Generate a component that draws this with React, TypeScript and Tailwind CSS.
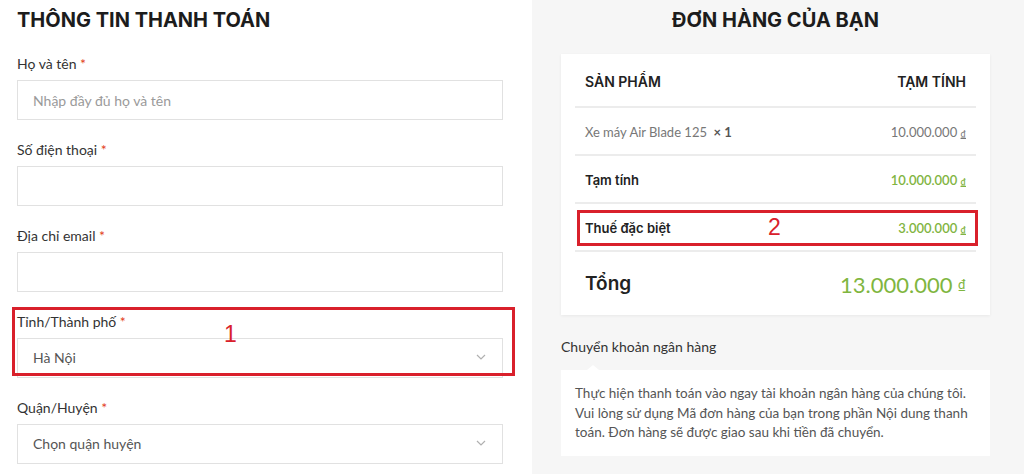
import React from "react";

function Label({ text }: { text: string }) {
  return (
    <div className="h-[20px] leading-[20px] text-[14px] text-[#333] mb-[6px] font-['Lato',sans-serif]">
      {text} <span className="text-[#e2401c]">*</span>
    </div>
  );
}

function Input({ placeholder }: { placeholder?: string }) {
  return (
    <div className="h-[40px] border border-[#e1e1e1] bg-white flex items-center px-[15px] text-[14px] text-[#9a9a9a] mb-[20px] font-['Lato',sans-serif]">
      {placeholder}
    </div>
  );
}

function Select({ value }: { value: string }) {
  return (
    <div className="h-[40px] border border-[#e1e1e1] bg-white flex items-center justify-between pl-[15px] pr-[16px] pb-[2px] text-[14px] text-[#555] mb-[20px] font-['Lato',sans-serif]">
      <span>{value}</span>
      <svg width="10" height="6" viewBox="0 0 10 6">
        <path d="M1 1l4 4 4-4" fill="none" stroke="#b0b0b0" strokeWidth="1.2" />
      </svg>
    </div>
  );
}

function Row({ label, amount, last }: { label: string; amount: string; last?: boolean }) {
  return (
    <div className={`h-[48px] flex items-center justify-between px-[10px] pt-[3px] ${last ? "" : "border-b-2 border-[#ececec]"}`}>
      <span className="text-[13px] font-semibold text-[#222] font-['Inter',sans-serif]">{label}</span>
      <span className="text-[13px] font-semibold text-[#81b441] font-['Lato',sans-serif]">
        {amount} <span className="text-[9px] underline">₫</span>
      </span>
    </div>
  );
}

export default function App() {
  return (
    <div className="w-[1024px] h-[474px] flex overflow-hidden bg-white relative">
      {/* Left */}
      <div className="w-[532px] pl-[17px] pr-[29px] pt-[6px]">
        <h1 className="text-[20px] leading-[28px] font-bold text-[#1c1c1c] mb-[20px] font-['Inter',sans-serif]">
          THÔNG TIN THANH TOÁN
        </h1>
        <Label text="Họ và tên" />
        <Input placeholder="Nhập đầy đủ họ và tên" />
        <Label text="Số điện thoại" />
        <Input />
        <Label text="Địa chỉ email" />
        <Input />
        <Label text="Tỉnh/Thành phố" />
        <Select value="Hà Nội" />
        <Label text="Quận/Huyện" />
        <Select value="Chọn quận huyện" />
      </div>

      {/* Right */}
      <div className="flex-1 bg-[#f6f6f6] pl-[29px] pr-[34px] pt-[6px]">
        <h2 className="text-[20px] leading-[28px] font-bold text-[#1c1c1c] text-center mb-[20px] font-['Inter',sans-serif]">
          ĐƠN HÀNG CỦA BẠN
        </h2>
        <div className="bg-white shadow-[0_1px_3px_rgba(0,0,0,0.06)] px-[14px]">
          <div className="h-[54px] flex items-center justify-between px-[10px] pt-[3px] border-b-2 border-[#ececec] text-[14px] font-semibold text-[#222] font-['Inter',sans-serif]">
            <span>SẢN PHẨM</span>
            <span>TẠM TÍNH</span>
          </div>
          <div className="h-[48px] flex items-center justify-between px-[10px] pt-[3px] border-b-2 border-[#ececec] text-[13px] text-[#777] font-['Lato',sans-serif]">
            <span>
              Xe máy Air Blade 125 <span className="font-bold text-[#555]">&nbsp;× 1</span>
            </span>
            <span>
              10.000.000 <span className="text-[9px] underline">₫</span>
            </span>
          </div>
          <Row label="Tạm tính" amount="10.000.000" />
          <Row label="Thuế đặc biệt" amount="3.000.000" />
          <div className="h-[63px] flex items-center justify-between px-[10px] pt-[2px]">
            <span className="text-[19px] font-semibold text-[#222] font-['Inter',sans-serif]">Tổng</span>
            <span className="text-[22px] text-[#7fb63f] font-['Lato',sans-serif]">
              13.000.000 <span className="text-[13px] underline align-[4px]">₫</span>
            </span>
          </div>
        </div>
        <div className="mt-[22px] h-[20px] leading-[20px] text-[14px] text-[#333] font-['Lato',sans-serif]">
          Chuyển khoản ngân hàng
        </div>
        <div className="relative mt-[13px] bg-white px-[14px] pt-[14px] pb-[13px] text-[13.5px] leading-[19.5px] text-[#555] font-['Lato',sans-serif]">
          <div className="absolute -top-[5px] left-[26px] w-0 h-0 border-l-[6px] border-r-[6px] border-b-[5px] border-l-transparent border-r-transparent border-b-white" />
          Thực hiện thanh toán vào ngay tài khoản ngân hàng của chúng tôi. Vui lòng sử dụng Mã đơn hàng của bạn trong phần Nội dung thanh toán. Đơn hàng sẽ được giao sau khi tiền đã chuyển.
        </div>
      </div>

      {/* Annotation overlays */}
      <div className="absolute left-[12px] top-[307px] w-[503px] h-[69px] border-[3px] border-[#d9202b] pointer-events-none" />
      <div className="absolute left-[224px] top-[320px] text-[23px] leading-[28px] text-[#d9202b] font-['Liberation_Sans',sans-serif]">1</div>
      <div className="absolute left-[577px] top-[210px] w-[401px] h-[36px] border-[3px] border-[#d9202b] pointer-events-none" />
      <div className="absolute left-[768px] top-[213px] text-[23px] leading-[28px] text-[#d9202b] font-['Liberation_Sans',sans-serif]">2</div>
    </div>
  );
}
